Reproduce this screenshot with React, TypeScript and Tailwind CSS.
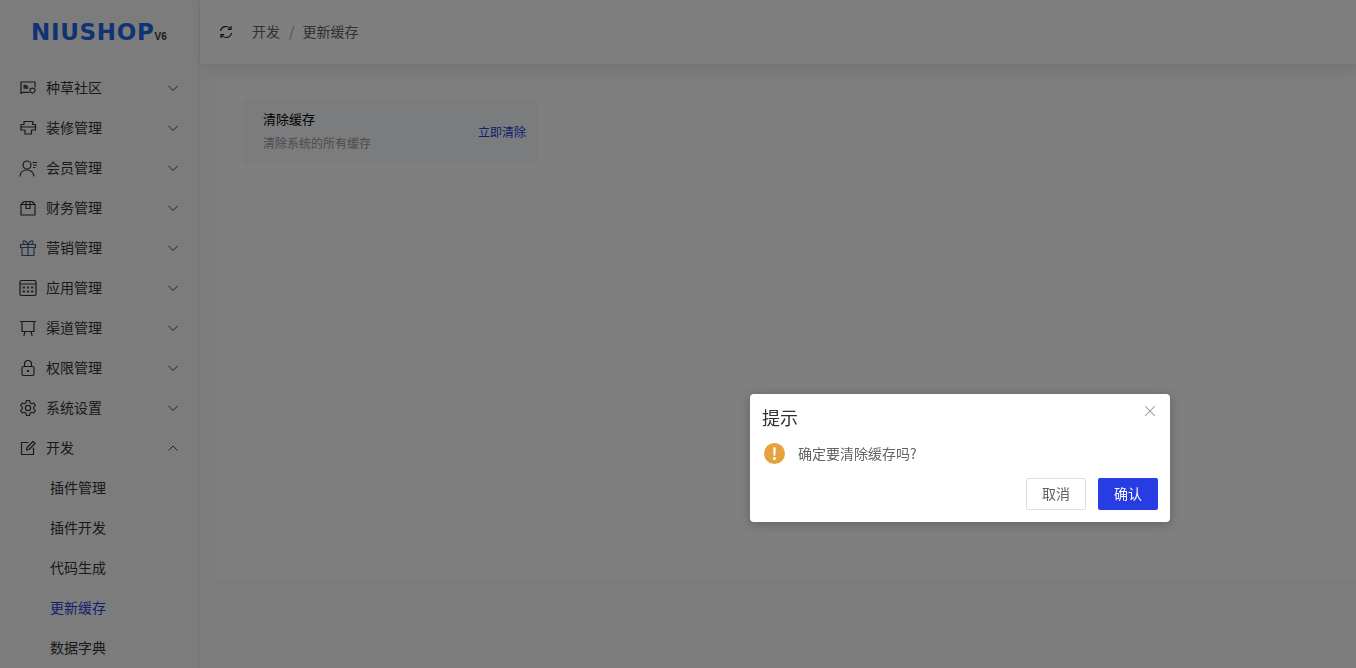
import { X } from "lucide-react"
import type { ReactNode } from "react"

const font = { fontFamily: '"Noto Sans CJK SC", "Liberation Sans", sans-serif' }

function Icon({ children }: { children: ReactNode }) {
  return (
    <svg viewBox="0 0 18 18" fill="none" stroke="#333333" strokeWidth="1.2" strokeLinecap="round" strokeLinejoin="round" className="w-[18px] h-[18px] shrink-0">
      {children}
    </svg>
  )
}

const menu: { label: string; icon: ReactNode }[] = [
  {
    label: "种草社区",
    icon: (
      <>
        <path d="M2 3h14v5M2 3v11.500l2-1.200h6" />
        <path d="M5 6h2l2 1.500v2H5z" fill="#555555" strokeWidth="0.5" />
        <path d="M11 10l2.500-1 2.500 1v1.500c0 1-1 2.200-2.500 2.700-1.500-.5-2.500-1.700-2.500-2.700z" />
      </>
    ),
  },
  {
    label: "装修管理",
    icon: (
      <>
        <path d="M5 2.500h9l-.5 3h3v5.500h-4v4H6v-4H2V5.500h3z" />
        <path d="M2 8h14" />
      </>
    ),
  },
  {
    label: "会员管理",
    icon: (
      <>
        <circle cx="8" cy="6" r="4" />
        <path d="M1 17c.5-4 3-6 7-6s6 2 7 6" />
        <path d="M14 3.500h3.500M14.500 6h3M14.500 8.500h1.500" />
      </>
    ),
  },
  {
    label: "财务管理",
    icon: (
      <>
        <path d="M2 5.500l3-3h8l3 3v10.500H2z" />
        <path d="M2 5.500h14M7 2.500v7h4v-7" />
      </>
    ),
  },
  {
    label: "营销管理",
    icon: (
      <g stroke="#3f5f80">
        <path d="M1.500 5.500h15v3h-15zM3 8.500v8h12v-8M9 5.500v11" />
        <path d="M9 5.500C7 1 3.500 1 4 3.500c.2 1.200 2 2 5 2zM9 5.500C11 1 14.500 1 14 3.500c-.2 1.200-2 2-5 2z" />
      </g>
    ),
  },
  {
    label: "应用管理",
    icon: (
      <>
        <rect x="1" y="1.500" width="16" height="15" rx="1.500" stroke="#3a2438" />
        <path d="M1 5h16" stroke="#3a2438" />
        <path d="M3.500 8.500h2.500M7.800 8.500h2.500M12 8.500h2.500M3.500 12.500h2.500M7.800 12.500h2.500M12 12.500h2.500" strokeWidth="2.200" strokeLinecap="butt" stroke="#6b5030" />
      </>
    ),
  },
  {
    label: "渠道管理",
    icon: (
      <path d="M1.500 2.500h15M3 2.500v10h12v-10M6 12.500l-1 4M12 12.500l1 4" />
    ),
  },
  {
    label: "权限管理",
    icon: (
      <>
        <rect x="3" y="7.500" width="12" height="9" rx="1.500" />
        <path d="M5.500 7.500V5a3.500 3.500 0 017 0v2.500" />
        <path d="M9 11v2" strokeWidth="2" strokeLinecap="butt" />
      </>
    ),
  },
  {
    label: "系统设置",
    icon: (
      <>
        <path d="M7.500 1.500h3l.5 2.200 1.700 1 2.100-.7 1.500 2.600-1.600 1.500v1.800l1.600 1.500-1.500 2.600-2.100-.7-1.700 1-.5 2.200h-3l-.5-2.200-1.700-1-2.100.7L1.700 11.400l1.600-1.500V8.100L1.700 6.600l1.500-2.600 2.100.7 1.700-1z" />
        <circle cx="9" cy="9" r="2.600" />
      </>
    ),
  },
  {
    label: "开发",
    icon: (
      <>
        <path d="M14.500 9v6.500h-12v-12H9" />
        <path d="M7.500 11l.5-2.500L14 2.500l2 2-6 6z" />
      </>
    ),
  },
]

const subMenu = ["插件管理", "插件开发", "代码生成", "更新缓存", "数据字典"]

function Chevron({ up }: { up?: boolean }) {
  return (
    <svg viewBox="0 0 12 12" fill="none" stroke="#444444" strokeWidth="1" className="w-3 h-3 shrink-0">
      <path d={up ? "M1.500 8.500L6 4l4.500 4.500" : "M1.500 4L6 8.500 10.500 4"} />
    </svg>
  )
}

export default function App() {
  return (
    <div className="flex w-full h-screen overflow-hidden bg-[#f8f8f8] text-[#333333]" style={font}>
      <aside className="w-[200px] shrink-0 h-full overflow-hidden bg-[#f9f9f9] border-r border-[#efefef]">
        <div className="h-[68px] pl-[31px] pt-[17px] flex items-start">
          <span className="text-[#1f68e6] text-[23px] leading-[30px] font-bold tracking-[0.700px]" style={{ fontFamily: '"DejaVu Sans", sans-serif' }}>NIUSHOP</span>
          <span className="text-[#333333] text-[10px] leading-none font-bold mt-[15px]" style={{ fontFamily: '"Liberation Sans", sans-serif' }}>V6</span>
        </div>
        {menu.map((m, i) => (
          <div key={m.label} className="h-10 pl-[19px] pr-[20px] flex items-center text-sm">
            <Icon>{m.icon}</Icon>
            <span className="ml-[9px] flex-1 -translate-y-px">{m.label}</span>
            <Chevron up={i === menu.length - 1} />
          </div>
        ))}
        {subMenu.map((s) => (
          <div key={s} className={`h-10 pl-[50px] flex items-center text-sm ${s === "更新缓存" ? "text-[#273ce2]" : ""}`}>
            <span className="-translate-y-px">{s}</span>
          </div>
        ))}
      </aside>

      <div className="flex-1 min-w-0 flex flex-col">
        <header className="h-16 shrink-0 bg-white shadow-[0_2px_12px_rgba(0,0,0,0.1)] pl-[19px] flex items-center text-sm text-[#606266]">
          <svg viewBox="0 0 14 14" fill="none" stroke="#222222" strokeWidth="1.200" className="w-[14px] h-[14px] shrink-0">
            <path d="M1.500 6A5.500 5.500 0 0111.500 4M12.500 8A5.500 5.500 0 012.500 10" />
            <path d="M12 1v3.300H8.800M2 13V9.700h3.200" />
          </svg>
          <span className="ml-[19px] -translate-y-px">开发</span>
          <span className="ml-[9px] mr-2 text-[#a0a0a0] -translate-y-px">/</span>
          <span className="-translate-y-px">更新缓存</span>
        </header>
        <main className="flex-1 min-h-0 pt-[15px] pl-[15px]">
          <div className="h-[500px] bg-white pt-5 pl-7">
            <div className="w-[295px] h-[65px] bg-[#f7f8fa] pl-5 pr-3 flex items-center justify-between">
              <div>
                <div className="text-[13px] leading-[18px] text-black -translate-y-[2px]">清除缓存</div>
                <div className="text-xs leading-[16px] mt-[5px] text-[#999999]">清除系统的所有缓存</div>
              </div>
              <span className="text-xs text-[#273ce2]">立即清除</span>
            </div>
          </div>
        </main>
      </div>

      <div className="fixed inset-0 bg-black/50" />
      <div className="fixed left-[750px] top-[394px] w-[420px] h-[128px] bg-white rounded px-3 pt-[9px] shadow-[0_2px_12px_rgba(0,0,0,0.25)]">
        <div className="flex items-start justify-between h-[28px]">
          <span className="text-lg leading-[28px] text-[#303133]">提示</span>
          <X className="w-[18px] h-[18px] -mr-px -mt-px text-[#909399]" strokeWidth={1.4} />
        </div>
        <div className="flex items-center mt-[11px] h-[22px] pl-[2px]">
          <span className="w-[21px] h-[21px] rounded-full bg-[#e6a23c] text-white flex items-center justify-center text-base font-bold">!</span>
          <span className="ml-[13px] text-sm text-[#606266]">确定要清除缓存吗?</span>
        </div>
        <div className="flex justify-end gap-3 mt-[14px]">
          <button className="w-[60px] h-8 rounded-[2px] bg-white border border-[#dcdfe6] text-sm text-[#606266]"><span className="relative -top-px">取消</span></button>
          <button className="w-[60px] h-8 rounded-[2px] bg-[#273ce2] text-sm text-white"><span className="relative -top-px">确认</span></button>
        </div>
      </div>
    </div>
  )
}
